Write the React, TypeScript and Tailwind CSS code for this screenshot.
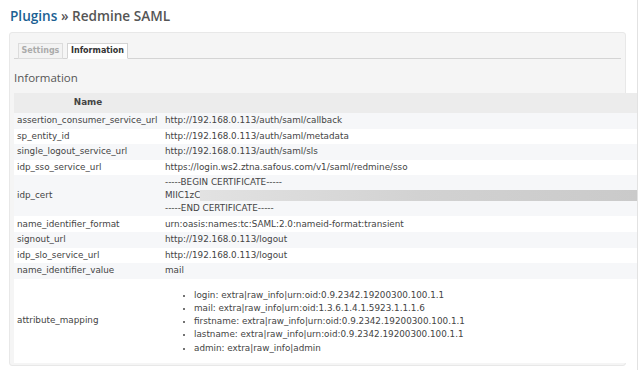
const rows: { name: string; value: React.ReactNode; kind?: 'cert' | 'list' }[] = [
  { name: 'assertion_consumer_service_url', value: 'http://192.168.0.113/auth/saml/callback' },
  { name: 'sp_entity_id', value: 'http://192.168.0.113/auth/saml/metadata' },
  { name: 'single_logout_service_url', value: 'http://192.168.0.113/auth/saml/sls' },
  { name: 'idp_sso_service_url', value: 'https://login.ws2.ztna.safous.com/v1/saml/redmine/sso' },
  { name: 'idp_cert', value: null, kind: 'cert' },
  { name: 'name_identifier_format', value: 'urn:oasis:names:tc:SAML:2.0:nameid-format:transient' },
  { name: 'signout_url', value: 'http://192.168.0.113/logout' },
  { name: 'idp_slo_service_url', value: 'http://192.168.0.113/logout' },
  { name: 'name_identifier_value', value: 'mail' },
  { name: 'attribute_mapping', value: null, kind: 'list' },
];

const mapping = [
  'login: extra|raw_info|urn:oid:0.9.2342.19200300.100.1.1',
  'mail: extra|raw_info|urn:oid:1.3.6.1.4.1.5923.1.1.1.6',
  'firstname: extra|raw_info|urn:oid:0.9.2342.19200300.100.1.1',
  'lastname: extra|raw_info|urn:oid:0.9.2342.19200300.100.1.1',
  'admin: extra|raw_info|admin',
];

function Value({ row }: { row: (typeof rows)[number] }) {
  if (row.kind === 'cert') {
    return (
      <div className="py-[1px] leading-[13px]">
        <div>-----BEGIN CERTIFICATE-----</div>
        <div className="flex items-center">
          <span>MIIC1zC</span>
          {/* redacted part of the certificate */}
          <div className="h-[11px] flex-1 bg-gradient-to-r from-[#e2e2e2] via-[#d2d2d2] to-[#cacaca] blur-[0.5px]" />
        </div>
        <div>-----END CERTIFICATE-----</div>
      </div>
    );
  }
  if (row.kind === 'list') {
    return (
      <ul className="mt-[10px] mb-[8px] list-disc pl-[29px] leading-[13.2px] marker:text-[7px]">
        {mapping.map((m) => (
          <li key={m}>{m}</li>
        ))}
      </ul>
    );
  }
  return <span>{row.value}</span>;
}

export default function App() {
  return (
    <div className="relative h-[370px] w-[640px] overflow-hidden bg-white font-['DejaVu_Sans',sans-serif] text-[#444]">
      <div className="absolute top-0 right-[2px] h-full w-px bg-[#e2e2e2]" />

      <div className="flex h-[32px] items-center pl-[10px] font-['Open_Sans',sans-serif] text-[13.6px] font-semibold">
        <span className="text-[#1b6193]">Plugins</span>
        <span className="text-[#555]">&nbsp;»&nbsp;Redmine SAML</span>
      </div>

      <div className="ml-[9px] h-[334px] w-[617px] rounded-[3px] border border-[#e8e8e8] bg-[#f5f5f5] px-[4px] pt-[10px]">
        {/* tabs */}
        <div className="flex h-[16px] items-end border-b border-[#d4d4d4]">
          <div className="-mb-px ml-[4px] flex h-[16px] w-[45px] items-center justify-center border border-[#dcdcdc] bg-[#f3f3f3] text-[8px] font-bold text-[#ababab]">
            Settings
          </div>
          <div className="-mb-px ml-[4px] flex h-[16px] w-[61px] items-center justify-center border border-b-white border-[#d4d4d4] bg-white text-[8px] font-bold text-[#333]">
            Information
          </div>
        </div>

        <div className="mt-[12px] mb-[8px] font-['Open_Sans',sans-serif] text-[11.5px] leading-[14px] font-medium text-[#555]">
          Information
        </div>

        <table className="w-[623px] border-collapse text-[8.8px]">
          <thead>
            <tr className="h-[20px] bg-[#ececec]">
              <th className="w-[148px] text-center font-bold text-[#444]">Name</th>
              <th />
            </tr>
          </thead>
          <tbody>
            {rows.map((r, i) => (
              <tr key={r.name} className={i % 2 === 0 ? 'bg-[#f6f7f9]' : 'bg-white'}>
                <td className="h-[15.6px] w-[148px] py-0 pl-[3px] leading-[13px] whitespace-nowrap">{r.name}</td>
                <td className="h-[15.6px] py-0 pl-[3px] leading-[13px] whitespace-nowrap">
                  <Value row={r} />
                </td>
              </tr>
            ))}
          </tbody>
        </table>
      </div>
    </div>
  );
}
